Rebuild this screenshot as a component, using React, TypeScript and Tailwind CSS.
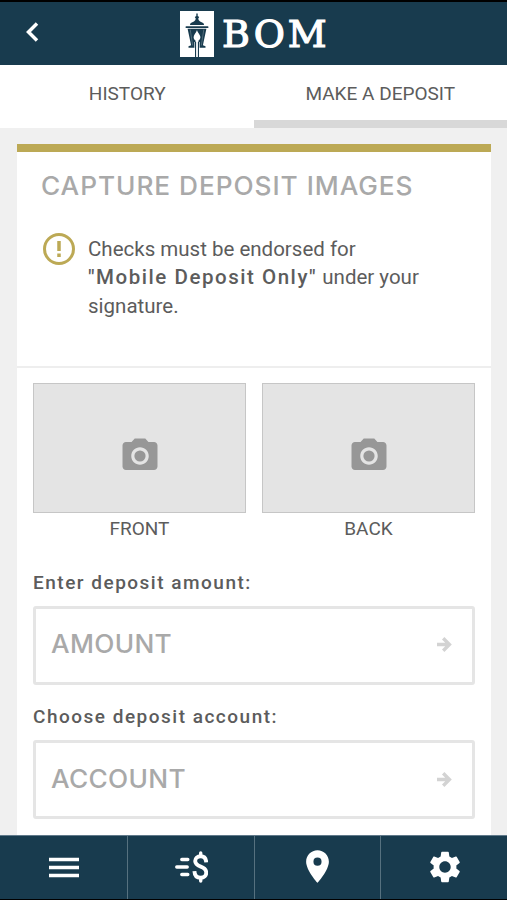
import React from "react";
import { MdPhotoCamera, MdPlace, MdSettings } from "react-icons/md";

const LanternLogo = () => (
  <svg width="34" height="46" viewBox="0 0 34 46" fill="#183b4e">
    <rect width="34" height="46" fill="#fff" />
    <path d="M16.300 2.500h1.400v2.400l1.500 1-1 1.900c.3 2.200 2.800 3.300 5.300 4.500l.6 1.700H9.900l.6-1.700c2.500-1.200 5-2.300 5.300-4.500l-1-1.900 1.500-1z" />
    <rect x="5.600" y="15.200" width="22.800" height="1.900" rx=".6" />
    <path d="M7.600 17.800h18.800l-3.500 16.400 2.600 1v1.600H8.500v-1.600l2.600-1z" />
    <path stroke="#fff" strokeWidth=".7" d="M10.200 18.500l2.500 16M23.800 18.500l-2.500 16" opacity=".35" />
    <path fill="#fff" d="M17 19c.8 3.200 3.400 4.700 3.400 7.300 0 1.600-.9 2.800-2 3.400V31h1.200v15h-5.200V31h1.200v-1.300c-1.100-.6-2-1.800-2-3.400 0-2.600 2.600-4.100 3.400-7.300z" />
    <path d="M15 31h1.100v15H15zM17.900 31H19v15h-1.100z" />
  </svg>
);

const MenuIcon = () => (
  <svg width="30" height="22" viewBox="0 0 30 22" fill="none" stroke="#fff" strokeWidth="3.600">
    <path d="M0 2.500h30M0 10.500h30M0 18.500h30" />
  </svg>
);

const SendMoneyIcon = () => (
  <svg className="-translate-y-px" width="33" height="33" viewBox="0 0 34 34" fill="none" stroke="#fff" strokeLinecap="round">
    <path strokeWidth="3.500" d="M7 9.800h6.200M1.800 17.500h10.800M7 25.300h6.200" />
    <path strokeWidth="4" strokeLinecap="butt" d="M32.200 12.800C31.900 8.700 29.900 6.500 26.500 6.500c-3.600 0-5.700 2-5.700 4.900 0 3.400 2.500 4.500 5.700 5.700 3.600 1.300 5.700 2.600 5.700 6.200 0 3.300-2.300 5.300-5.700 5.300-3.900 0-6.300-2.500-6.500-6.900" />
    <path strokeWidth="3.500" d="M26.500 3v3M26.500 29v3" />
  </svg>
);

const ArrowIcon = () => (
  <svg width="16" height="16" viewBox="0 0 16 16" fill="none" stroke="#d3d3d3" strokeWidth="3.400">
    <path d="M1 7.500h12M7.200 1.300l6.200 6.200-6.200 6.200" />
  </svg>
);

const CheckPhoto = ({ label }: { label: string }) => (
  <div className="w-[213px]">
    <div className="flex h-[130px] items-center justify-center border border-[#c6c6c6] bg-[#e4e4e4] pt-[15px]">
      <MdPhotoCamera size={42} color="#979797" />
    </div>
    <p className="mt-1 text-center text-[19px] leading-6">{label}</p>
  </div>
);

const Field = ({ label, placeholder }: { label: string; placeholder: string }) => (
  <div className="h-[134.5px]">
    <p className="h-[35px] text-[19px] font-medium leading-6 tracking-[1.500px]">{label}</p>
    <button className="flex h-[79px] w-full items-center justify-between rounded-[3px] border-3 border-[#e5e5e5] pl-[15px] pr-5">
      <span className="origin-left scale-x-105 font-['Inter',sans-serif] text-[25px] font-medium tracking-[0.300px] text-[#a9a9a9]">
        {placeholder}
      </span>
      <ArrowIcon />
    </button>
  </div>
);

const App: React.FC = () => {
  return (
    <div className="flex h-[900px] w-[507px] flex-col overflow-hidden bg-[#f0f0f0] font-['Roboto',sans-serif] text-[#5c5c5c]">
      <header className="grid h-[65px] shrink-0 grid-cols-[180px_1fr] items-center border-t-2 border-black bg-[#183b4e]">
        <svg className="mb-[3px] ml-[26px]" width="13" height="20" viewBox="0 0 13 20" fill="none" stroke="#fff" strokeWidth="3.500">
          <path d="M11 1.500 2.500 10l8.500 8.500" />
        </svg>
        <div className="flex items-center gap-2">
          <LanternLogo />
          <span className="font-['DejaVu_Serif',serif] text-[38px] leading-none tracking-[3px] text-white [-webkit-text-stroke:1.200px_white]">
            BOM
          </span>
        </div>
      </header>

      <nav className="grid h-[63px] shrink-0 grid-cols-2 bg-white text-[19px]">
        <button className="border-b-8 border-white pl-px pt-[3px]">HISTORY</button>
        <button className="border-b-8 border-[#d8d8d8] pt-[3px]">MAKE A DEPOSIT</button>
      </nav>

      <main className="ml-[17px] mt-4 w-[474px] flex-1 overflow-hidden border-t-8 border-[#bca955] bg-white">
        <section className="h-[216px] border-b-2 border-[#eeeeee] pl-6 pt-[18px]">
          <h1 className="origin-left scale-x-105 whitespace-nowrap font-['Inter',sans-serif] text-[25px] font-medium leading-8 tracking-[0.900px] text-[#a9a9a9]">
            CAPTURE DEPOSIT IMAGES
          </h1>
          <div className="mt-[31px] flex gap-[13px] pl-0.5">
            <svg width="32" height="32" viewBox="0 0 32 32" fill="none" stroke="#bca955">
              <circle cx="16" cy="16" r="14.500" strokeWidth="3" />
              <path strokeWidth="3.500" d="M16 8v10M16 20.500V24" />
            </svg>
            <p className="mt-[1.500px] whitespace-nowrap text-[20.500px] leading-[28.500px]">
              Checks must be endorsed for
              <br />
              <strong className="font-medium tracking-[1.540px]">"Mobile Deposit Only"</strong> under your
              <br />
              signature.
            </p>
          </div>
        </section>

        <section className="px-4 pt-[15px]">
          <div className="flex justify-between">
            <CheckPhoto label="FRONT" />
            <CheckPhoto label="BACK" />
          </div>
          <div className="mt-[29.500px]">
            <Field label="Enter deposit amount:" placeholder="AMOUNT" />
            <Field label="Choose deposit account:" placeholder="ACCOUNT" />
          </div>
        </section>
      </main>

      <footer className="grid h-[65px] shrink-0 grid-cols-4 border-b border-t border-b-black border-t-[#60798a] bg-[#183b4e] text-white *:flex *:items-center *:justify-center">
        <button className="pl-0.5">
          <MenuIcon />
        </button>
        <button className="border-l border-[#56717f] pl-0.5">
          <SendMoneyIcon />
        </button>
        <button className="border-l border-[#56717f] pb-0.5">
          <MdPlace size={39} />
        </button>
        <button className="border-l border-[#56717f] pb-0.5 pl-px">
          <MdSettings size={38} />
        </button>
      </footer>
    </div>
  );
};

export default App;
